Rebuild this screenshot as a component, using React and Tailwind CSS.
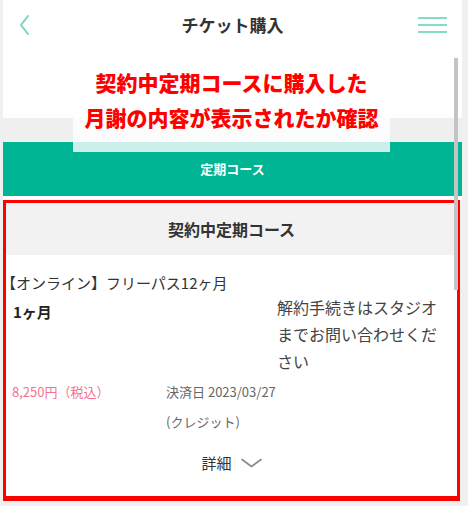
import React from 'react';

const BackIcon = () => (
  <svg width="12" height="22" viewBox="0 0 12 22" fill="none">
    <path d="M10 2L3 11l7 9" stroke="#7ad3bf" strokeWidth="2" strokeLinecap="round" strokeLinejoin="round" />
  </svg>
);

const MenuIcon = () => (
  <div className="flex flex-col gap-[5px] w-[29px]">
    <span className="block h-[2px] bg-[#84dcc6]" />
    <span className="block h-[2px] bg-[#84dcc6]" />
    <span className="block h-[2px] bg-[#84dcc6]" />
  </div>
);

const ChevronDown = () => (
  <svg width="21" height="10" viewBox="0 0 21 10" fill="none">
    <path d="M1 1.5l9.5 7 9.5-7" stroke="#8a8a8a" strokeWidth="1.6" strokeLinecap="round" strokeLinejoin="round" />
  </svg>
);

export default function App() {
  return (
    <div className="relative w-[468px] h-[506px] overflow-hidden bg-[#f0f0f0] flex font-['Noto_Sans_CJK_JP',sans-serif]">
      <div className="w-[3px] shrink-0" />

      <div className="w-[459px] shrink-0 flex flex-col">
        {/* Header */}
        <header className="h-[50px] bg-white flex items-center px-[15px]">
          <div className="w-[30px] flex items-center">
            <BackIcon />
          </div>
          <h1 className="flex-1 text-center text-[17px] font-bold text-[#333]">チケット購入</h1>
          <div className="w-[30px] flex justify-end">
            <MenuIcon />
          </div>
        </header>

        <div className="h-[68px] bg-white" />
        <div className="h-[24px] bg-[#efefef]" />

        {/* Tab */}
        <div className="h-[54px] bg-[#00b593] flex items-center justify-center">
          <span className="text-[13px] font-bold text-white">定期コース</span>
        </div>
        <div className="h-[4px] bg-white" />

        {/* Contract card */}
        <section className="w-[457px] h-[301px] border-[3px] border-b-[5px] border-[#ff0000] bg-white flex flex-col">
          <div className="h-[52px] bg-[#f2f2f2] flex items-center justify-center">
            <h2 className="text-[16px] font-bold text-[#333]">契約中定期コース</h2>
          </div>

          <div className="pt-[17px] text-[#333]">
            <p className="-ml-[5px] text-[15px] leading-[22px] whitespace-nowrap">【オンライン】フリーパス12ヶ月</p>

            <div className="flex">
              <div className="flex-1 pl-[7px] pt-[7px]">
                <p className="text-[15px] leading-[22px] font-bold text-[#222]">1ヶ月</p>
              </div>
              <div className="w-[180px] text-[16px] leading-[27px] text-[#444]">
                <p className="whitespace-nowrap">解約手続きはスタジオ</p>
                <p className="whitespace-nowrap">までお問い合わせくだ</p>
                <p className="whitespace-nowrap">さい</p>
              </div>
            </div>

            <div className="mt-[2px] flex">
              <div className="w-[160px] pl-[6px]">
                <p className="text-[13px] leading-[30px] text-[#f7718f] whitespace-nowrap">8,250円（税込）</p>
              </div>
              <div className="text-[13px] leading-[30px] text-[#666]">
                <p>決済日 2023/03/27</p>
                <p>(クレジット)</p>
              </div>
            </div>

            <div className="mt-[14px] flex items-center justify-center gap-[9px] leading-[24px]">
              <span className="text-[15px] text-[#333]">詳細</span>
              <ChevronDown />
            </div>
          </div>
        </section>
      </div>

      {/* Scrollbar thumb */}
      <div className="absolute left-[454px] top-[58px] w-[4px] h-[232px] bg-[#c4c4c4]" />

      {/* Annotation */}
      <div className="absolute left-[73px] top-[55px] w-[317px] h-[97px] bg-white/80 pt-[10px] flex flex-col items-center">
        <p className="text-[21px] leading-[35px] font-black text-[#ff0000] whitespace-nowrap">契約中定期コースに購入した</p>
        <p className="text-[21px] leading-[35px] font-black text-[#ff0000] whitespace-nowrap">月謝の内容が表示されたか確認</p>
      </div>
    </div>
  );
}
